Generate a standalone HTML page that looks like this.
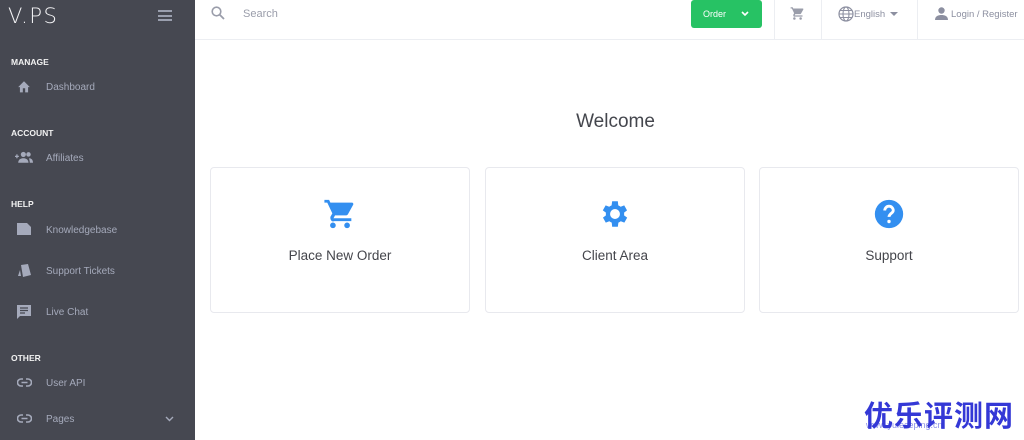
<!DOCTYPE html>
<html><head><meta charset="utf-8"><style>
*{margin:0;padding:0;box-sizing:border-box}
body{width:1024px;height:440px;overflow:hidden;background:#fff;font-family:"Liberation Sans",sans-serif;position:relative}
.sb{position:absolute;left:0;top:0;width:195px;height:440px;background:#464851}
.logo{position:absolute;left:8px;top:4px;color:#f4f4f6;font-size:21px;letter-spacing:1.5px;font-family:"DejaVu Sans",sans-serif;font-weight:200}
.ham{position:absolute;left:158px;top:10px;width:14px}
.ham i{display:block;height:2px;background:#9a9fae;margin-bottom:2.5px}
.sec{position:absolute;left:11px;color:#f2f2f2;font-size:8.5px;font-weight:bold}
.it{position:absolute;left:46px;color:#a5aabb;font-size:10px;margin-top:1px}
.ic{position:absolute;left:17px}
.hdr{position:absolute;left:195px;top:0;right:0;height:40px;border-bottom:1px solid #eceef2}
.order{position:absolute;left:691px;top:0;width:71px;height:28px;background:#27c264;border-radius:3px;color:#fff;font-size:9px;padding:9px 0 0 12px}
.sep{position:absolute;top:0;width:1px;height:40px;background:#eceef2}
.g{color:#8c8fa0;font-size:9.5px;position:absolute}
.card{position:absolute;top:167px;width:260px;height:146px;border:1px solid #e8e9ee;border-radius:4px;text-align:center}
.card .t{position:absolute;top:80px;left:0;right:0;font-size:13.5px;color:#44454b}
.card svg{position:absolute;top:29px;left:112px}
</style></head><body>
<div class="sb">
<div class="logo">V.PS</div>
<div class="ham"><i></i><i></i><i></i></div>
<div class="sec" style="top:57px">MANAGE</div>
<svg class="ic" style="top:80px" width="14" height="13" viewBox="0 0 24 22"><path d="M10 21v-7h4v7h5v-9h3L12 2 2 12h3v9z" fill="#a5aabb"/></svg>
<div class="it" style="top:81px">Dashboard</div>
<div class="sec" style="top:128px">ACCOUNT</div>
<svg class="ic" style="left:15px;top:151px" width="18" height="12" viewBox="0 0 28 18"><circle cx="13" cy="5" r="4" fill="#a5aabb"/><circle cx="21" cy="5" r="3.5" fill="#a5aabb"/><path d="M5 18c0-5 4-7 8-7s8 2 8 7zM22 11c3 0 6 2 6 7h-5c0-3-1-5-1-7z" fill="#a5aabb"/><path d="M0 8h6M3 5v6" stroke="#a5aabb" stroke-width="2"/></svg>
<div class="it" style="top:152px">Affiliates</div>
<div class="sec" style="top:199px">HELP</div>
<svg class="ic" style="top:223px" width="14" height="12" viewBox="0 0 14 12"><path d="M0 0h10l4 4v8H0z" fill="#a5aabb"/></svg>
<div class="it" style="top:224px">Knowledgebase</div>
<svg class="ic" style="top:263px" width="14" height="14" viewBox="0 0 14 14"><path d="M4 2l7-1 3 11-8 2z" fill="#a5aabb"/><path d="M1 13l2-6 1 6z" fill="#a5aabb"/></svg>
<div class="it" style="top:265px">Support Tickets</div>
<svg class="ic" style="top:305px" width="14" height="14" viewBox="0 0 14 14"><path d="M0 0h14v11H3l-3 3z" fill="#a5aabb"/><path d="M3 3h8M3 5.5h8M3 8h5" stroke="#464851" stroke-width="1.2"/></svg>
<div class="it" style="top:306px">Live Chat</div>
<div class="sec" style="top:353px">OTHER</div>
<svg class="ic" style="top:378px" width="15" height="9" viewBox="0 0 15 9"><path d="M6 1H4a3.5 3.5 0 000 7h2M9 1h2a3.5 3.5 0 010 7H9M4.5 4.5h6" stroke="#a5aabb" stroke-width="1.6" fill="none"/></svg>
<div class="it" style="top:377px">User API</div>
<svg class="ic" style="top:414px" width="15" height="9" viewBox="0 0 15 9"><path d="M6 1H4a3.5 3.5 0 000 7h2M9 1h2a3.5 3.5 0 010 7H9M4.5 4.5h6" stroke="#a5aabb" stroke-width="1.6" fill="none"/></svg>
<div class="it" style="top:413px">Pages</div>
<svg style="position:absolute;left:165px;top:416px" width="9" height="6" viewBox="0 0 9 6"><path d="M1 1l3.5 3.5L8 1" stroke="#a5aabb" stroke-width="1.4" fill="none"/></svg>
</div>
<div class="hdr"></div>
<svg style="position:absolute;left:211px;top:6px" width="14" height="14" viewBox="0 0 14 14"><circle cx="5.5" cy="5.5" r="4.3" stroke="#9a9daa" stroke-width="1.6" fill="none"/><path d="M8.5 8.5l4.5 4.5" stroke="#9a9daa" stroke-width="1.8"/></svg>
<div class="g" style="left:243px;top:8px;font-size:11px;color:#9a9daa">Search</div>
<div class="order">Order <svg style="margin-left:12px" width="8" height="6" viewBox="0 0 8 6"><path d="M1 1l3 3 3-3" stroke="#fff" stroke-width="1.6" fill="none"/></svg></div>
<div class="sep" style="left:774px"></div><div class="sep" style="left:821px"></div><div class="sep" style="left:917px"></div>
<svg style="position:absolute;left:790px;top:6px" width="15" height="15" viewBox="0 0 24 24"><path d="M7 18a2 2 0 100 4 2 2 0 000-4zM1 2v2h2l3.6 7.6-1.4 2.4C5 15.7 6 18 8 17h12v-2H7.4l1.1-2h7.5c.8 0 1.4-.4 1.7-1l3.6-6.5A1 1 0 0020.4 4H5.2L4.3 2zm16 16a2 2 0 100 4 2 2 0 000-4z" fill="#9a9daa"/></svg>
<svg style="position:absolute;left:838px;top:6px" width="16" height="16" viewBox="0 0 16 16"><circle cx="8" cy="8" r="7" stroke="#8c8fa0" stroke-width="1.2" fill="none"/><ellipse cx="8" cy="8" rx="3" ry="7" stroke="#8c8fa0" stroke-width="1.1" fill="none"/><path d="M1 8h14M2 4.5h12M2 11.5h12" stroke="#8c8fa0" stroke-width="1"/></svg>
<div class="g" style="left:854px;top:9px">English</div>
<svg style="position:absolute;left:890px;top:12px" width="8" height="5" viewBox="0 0 8 5"><path d="M0 0h8L4 4z" fill="#8c8fa0"/></svg>
<svg style="position:absolute;left:935px;top:7px" width="13" height="13" viewBox="0 0 13 13"><circle cx="6.5" cy="3.5" r="3.2" fill="#8c8fa0"/><path d="M0 13c0-4 3.5-5 6.5-5s6.5 1 6.5 5z" fill="#8c8fa0"/></svg>
<div class="g" style="left:951px;top:9px">Login / Register</div>
<div style="position:absolute;left:207px;right:0;top:111px;text-align:center;font-size:19px;color:#44464d">Welcome</div>
<div class="card" style="left:210px"><svg width="34" height="34" viewBox="0 0 24 24"><path d="M7 18a2 2 0 100 4 2 2 0 000-4zM1 2v2h2l3.6 7.6-1.4 2.4C5 15.7 6 18 8 17h12v-2H7.4l1.1-2h7.5c.8 0 1.4-.4 1.7-1l3.6-6.5A1 1 0 0020.4 4H5.2L4.3 2zm16 16a2 2 0 100 4 2 2 0 000-4z" fill="#338ff0"/></svg><div class="t">Place New Order</div></div>
<div class="card" style="left:485px"><svg width="34" height="34" viewBox="0 0 24 24"><path d="M19.4 13a7.5 7.5 0 000-2l2.1-1.6-2-3.5-2.5 1a7 7 0 00-1.7-1L15 3h-4l-.4 2.9a7 7 0 00-1.7 1l-2.5-1-2 3.5L6.6 11a7.5 7.5 0 000 2l-2.1 1.6 2 3.5 2.5-1c.5.4 1.1.7 1.7 1L11 21h4l.4-2.9c.6-.3 1.2-.6 1.7-1l2.5 1 2-3.5zM13 15.5a3.5 3.5 0 110-7 3.5 3.5 0 010 7z" fill="#338ff0" transform="translate(-1 0)"/></svg><div class="t">Client Area</div></div>
<div class="card" style="left:759px"><svg width="34" height="34" viewBox="0 0 24 24"><circle cx="12" cy="12" r="10" fill="#338ff0"/><path d="M9 9.5a3 3 0 016 0c0 2-3 2.2-3 4.5" stroke="#fff" stroke-width="2" fill="none"/><circle cx="12" cy="17.3" r="1.2" fill="#fff"/></svg><div class="t">Support</div></div>
<div style="position:absolute;left:866px;top:420px;font-size:9px;color:#8a8fe8">www.yuleceping.cn</div>
<div style="position:absolute;left:864px;top:397px;font-family:'Noto Sans CJK SC',sans-serif;font-weight:bold;font-size:29px;line-height:34px;color:#3438d6;letter-spacing:1px">优乐评测网</div>
</body></html>
